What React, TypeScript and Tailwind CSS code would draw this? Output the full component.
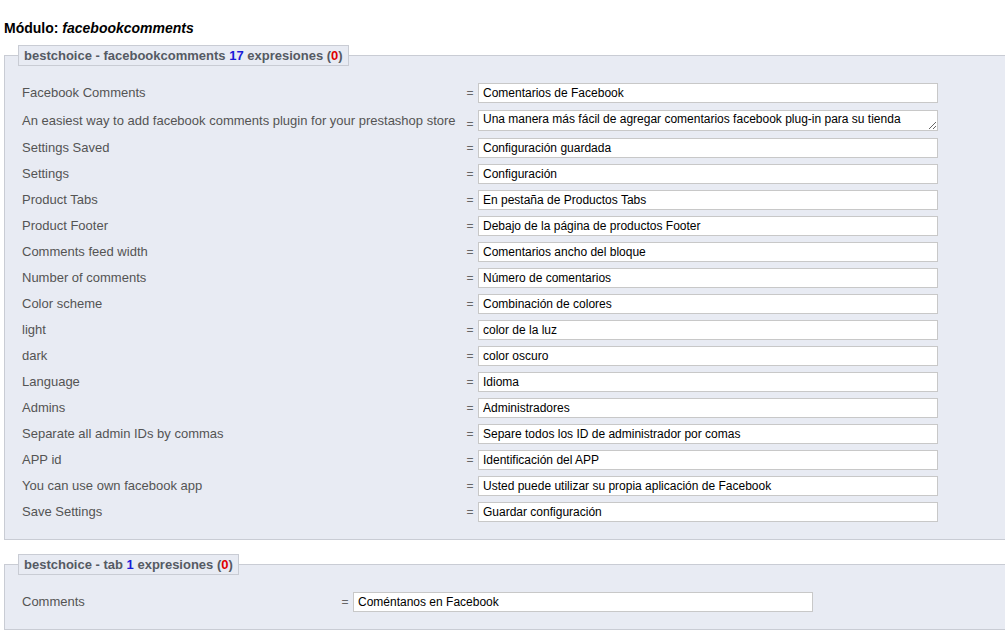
import React from 'react';

const MAIN_ROWS = [
  ['Facebook Comments', 'Comentarios de Facebook'],
  ['An easiest way to add facebook comments plugin for your prestashop store', 'Una manera más fácil de agregar comentarios facebook plug-in para su tienda'],
  ['Settings Saved', 'Configuración guardada'],
  ['Settings', 'Configuración'],
  ['Product Tabs', 'En pestaña de Productos Tabs'],
  ['Product Footer', 'Debajo de la página de productos Footer'],
  ['Comments feed width', 'Comentarios ancho del bloque'],
  ['Number of comments', 'Número de comentarios'],
  ['Color scheme', 'Combinación de colores'],
  ['light', 'color de la luz'],
  ['dark', 'color oscuro'],
  ['Language', 'Idioma'],
  ['Admins', 'Administradores'],
  ['Separate all admin IDs by commas', 'Separe todos los ID de administrador por comas'],
  ['APP id', 'Identificación del APP'],
  ['You can use own facebook app', 'Usted puede utilizar su propia aplicación de Facebook'],
  ['Save Settings', 'Guardar configuración'],
];

function Legend({ name, count }: { name: string; count: number }) {
  return (
    <legend className="ml-[-4px] h-[21px] border border-[#c9ccd4] bg-[#e8ebf3] px-[5px] text-[13px] font-bold leading-[19px] text-[#555a63]">
      {name} <span className="text-[#1b1bd9]">{count}</span> expresiones (<span className="text-[#e00000]">0</span>)
    </legend>
  );
}

function Row({ label, value, labelW, area }: { label: string; value: string; labelW: string; area?: boolean }) {
  return (
    <div className={`flex items-center ${area ? 'h-[29px]' : 'h-[26px]'}`}>
      <div className={`${labelW} shrink-0 text-[13px] text-[#545454]`}>{label}</div>
      <div className={`w-[16px] shrink-0 text-center text-[12px] text-[#666] ${area ? 'pt-[6px]' : ''}`}>=</div>
      {area ? (
        <textarea
          readOnly
          rows={1}
          defaultValue={value}
          className="h-[21px] w-[460px] resize overflow-hidden border border-[#c8c8c8] bg-white px-[4px] text-[12px] leading-[17px] text-black"
        />
      ) : (
        <input
          readOnly
          value={value}
          className="h-[20px] w-[460px] border border-[#c8c8c8] bg-white px-[4px] text-[12px] text-black outline-none"
        />
      )}
    </div>
  );
}

export default function App() {
  return (
    <div className="min-h-[643px] w-full overflow-hidden bg-white font-['Liberation_Sans',Arial,sans-serif]">
      <h2 className="pl-[4px] pt-[18px] text-[14px] font-bold leading-[20px] text-black">
        Módulo: <em>facebookcomments</em>
      </h2>

      <fieldset className="ml-[4px] mt-[7px] w-[1020px] border border-[#c9ccd4] bg-[#e8ebf3] pb-[14px] pl-[17px] pt-[14px]">
        <Legend name="bestchoice - facebookcomments" count={17} />
        {MAIN_ROWS.map(([l, v], i) => (
          <Row key={l} label={l} value={v} labelW="w-[440px]" area={i === 1} />
        ))}
      </fieldset>

      <fieldset className="ml-[4px] mt-[14px] w-[1020px] border border-[#c9ccd4] bg-[#e8ebf3] pb-[14px] pl-[17px] pt-[14px]">
        <Legend name="bestchoice - tab" count={1} />
        <Row label="Comments" value="Coméntanos en Facebook" labelW="w-[315px]" />
      </fieldset>
    </div>
  );
}
